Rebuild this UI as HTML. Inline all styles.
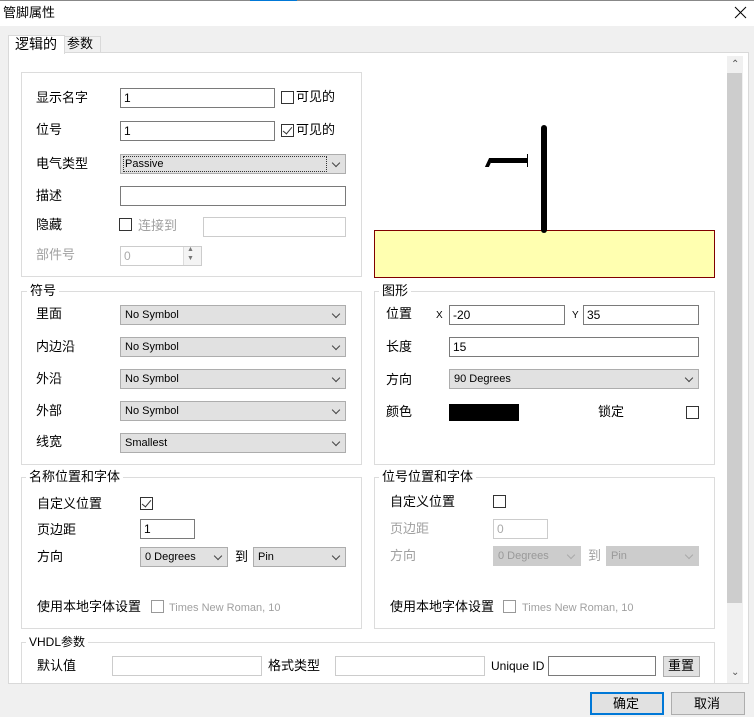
<!DOCTYPE html>
<html><head><meta charset="utf-8"><style>
*{box-sizing:border-box;margin:0;padding:0}
body{width:754px;height:717px;background:#f0f0f0;position:relative;overflow:hidden;font-family:"Liberation Sans","Noto Sans CJK SC",sans-serif;font-size:12px;color:#000}
.a{position:absolute}
.t{position:absolute;font-size:13px;line-height:16px;white-space:nowrap}
.g{color:#a0a0a0}
.in{position:absolute;height:20px;background:#fff;border:1px solid #7a7a7a;font-size:12px;line-height:18px;padding-left:3px}
.in.d{border-color:#ccc;color:#aaa}
.sel{position:absolute;height:20px;background:#e1e1e1;border:1px solid #adadad;font-size:11px;line-height:19px;padding-left:4px}
.sel:after{content:"";position:absolute;right:6px;top:5px;width:5px;height:5px;border-right:1px solid #444;border-bottom:1px solid #444;transform:rotate(45deg)}
.sel.d{border-color:#ccc;background:#ccc;color:#999}
.sel.d:after{border-color:#aaa}
.cb{position:absolute;width:13px;height:13px;border:1px solid #333;background:#fff}
.cb.k:after{content:"";position:absolute;left:3px;top:0px;width:4px;height:8px;border-right:1px solid #333;border-bottom:1px solid #333;transform:rotate(40deg)}
.cb.d{border-color:#999}
.box{position:absolute;border:1px solid #dcdcdc}
.lg{position:absolute;background:#fff;padding:0 3px;font-size:13px;line-height:16px}
</style></head><body>
<div class="a" style="left:0;top:0;width:754px;height:26px;background:#fff"></div>
<div class="a" style="left:0;top:0;width:250px;height:1px;background:#888"></div>
<div class="a" style="left:250px;top:0;width:47px;height:1px;background:#0078d7"></div>
<div class="a" style="left:297px;top:0;width:457px;height:1px;background:#888"></div>
<div class="t" style="left:3px;top:5px">管脚属性</div>
<svg class="a" style="left:734px;top:6px" width="13" height="13"><path d="M1 1L12 12M12 1L1 12" stroke="#000" stroke-width="1"/></svg>

<div class="a" style="left:64px;top:36px;width:37px;height:17px;background:#f0f0f0;border:1px solid #d9d9d9"></div>
<div class="t" style="left:67px;top:36px">参数</div>
<div class="a" style="left:8px;top:52px;width:741px;height:632px;background:#fff;border:1px solid #d9d9d9"></div>
<div class="a" style="left:8px;top:35px;width:57px;height:19px;background:#fff;border:1px solid #d9d9d9;border-bottom:none"></div>
<div class="t" style="left:15px;top:36px;font-size:14px">逻辑的</div>

<div class="a" style="left:727px;top:56px;width:16px;height:627px;background:#f0f0f0"></div>
<div class="a" style="left:727px;top:73px;width:15px;height:530px;background:#cdcdcd"></div>
<div class="t" style="left:731px;top:57px;font-size:10px;color:#555">&#8963;</div>
<div class="t" style="left:731px;top:665px;font-size:10px;color:#555">&#8964;</div>

<div class="box" style="left:21px;top:72px;width:341px;height:205px"></div>
<div class="t" style="left:36px;top:90px">显示名字</div>
<div class="in" style="left:120px;top:88px;width:155px">1</div>
<div class="cb" style="left:281px;top:91px"></div><div class="t" style="left:296px;top:89px">可见的</div>
<div class="t" style="left:36px;top:122px">位号</div>
<div class="in" style="left:120px;top:121px;width:155px">1</div>
<div class="cb k" style="left:281px;top:124px"></div><div class="t" style="left:296px;top:122px">可见的</div>
<div class="t" style="left:36px;top:156px">电气类型</div>
<div class="sel" style="left:120px;top:154px;width:226px;padding-left:2px"><span style="border:1px dotted #333;display:block;width:204px;height:16px;line-height:15px;margin-top:1px;padding-left:1px">Passive</span></div>
<div class="t" style="left:36px;top:188px">描述</div>
<div class="in" style="left:120px;top:186px;width:226px"></div>
<div class="t" style="left:36px;top:217px">隐藏</div>
<div class="cb" style="left:119px;top:218px"></div>
<div class="t g" style="left:138px;top:218px">连接到</div>
<div class="in d" style="left:203px;top:217px;width:143px"></div>
<div class="t g" style="left:36px;top:247px">部件号</div>
<div class="in d" style="left:120px;top:246px;width:82px">0</div>
<div class="a" style="left:183px;top:247px;width:18px;height:18px;border-left:1px solid #ddd;background:#f4f4f4"></div>
<div class="t" style="left:187px;top:245px;font-size:7px;color:#777;line-height:9px">▲<br>▼</div>

<div class="a" style="left:374px;top:230px;width:341px;height:48px;background:#ffffb0;border:1px solid #800000"></div>
<div class="a" style="left:541px;top:125px;width:6px;height:108px;background:#000;border-radius:3px"></div>
<div class="a" style="left:491px;top:158px;width:37px;height:5px;background:#000"></div>
<div class="a" style="left:527px;top:154px;width:1px;height:13px;background:#000"></div>
<div class="a" style="left:487px;top:158px;width:4px;height:9px;background:#000;transform:skewX(-25deg)"></div>

<div class="box" style="left:21px;top:291px;width:341px;height:174px"></div>
<div class="lg" style="left:27px;top:283px">符号</div>
<div class="t" style="left:36px;top:306px">里面</div><div class="sel" style="left:120px;top:305px;width:226px">No Symbol</div>
<div class="t" style="left:36px;top:339px">内边沿</div><div class="sel" style="left:120px;top:337px;width:226px">No Symbol</div>
<div class="t" style="left:36px;top:371px">外沿</div><div class="sel" style="left:120px;top:369px;width:226px">No Symbol</div>
<div class="t" style="left:36px;top:403px">外部</div><div class="sel" style="left:120px;top:401px;width:226px">No Symbol</div>
<div class="t" style="left:36px;top:434px">线宽</div><div class="sel" style="left:120px;top:433px;width:226px">Smallest</div>

<div class="box" style="left:374px;top:291px;width:341px;height:174px"></div>
<div class="lg" style="left:379px;top:283px">图形</div>
<div class="t" style="left:386px;top:306px">位置</div>
<div class="t" style="left:436px;top:308px;font-size:10px">X</div>
<div class="in" style="left:449px;top:305px;width:116px">-20</div>
<div class="t" style="left:572px;top:308px;font-size:10px">Y</div>
<div class="in" style="left:583px;top:305px;width:116px">35</div>
<div class="t" style="left:386px;top:339px">长度</div>
<div class="in" style="left:449px;top:337px;width:250px">15</div>
<div class="t" style="left:386px;top:372px">方向</div>
<div class="sel" style="left:449px;top:369px;width:250px">90 Degrees</div>
<div class="t" style="left:386px;top:404px">颜色</div>
<div class="a" style="left:449px;top:404px;width:70px;height:17px;background:#000"></div>
<div class="t" style="left:598px;top:404px">锁定</div>
<div class="cb" style="left:686px;top:406px"></div>

<div class="box" style="left:21px;top:477px;width:341px;height:152px"></div>
<div class="lg" style="left:26px;top:469px">名称位置和字体</div>
<div class="t" style="left:37px;top:496px">自定义位置</div>
<div class="cb k" style="left:140px;top:497px"></div>
<div class="t" style="left:37px;top:522px">页边距</div>
<div class="in" style="left:140px;top:519px;width:55px">1</div>
<div class="t" style="left:37px;top:549px">方向</div>
<div class="sel" style="left:140px;top:547px;width:88px">0 Degrees</div>
<div class="t" style="left:235px;top:549px">到</div>
<div class="sel" style="left:253px;top:547px;width:93px">Pin</div>
<div class="t" style="left:37px;top:599px">使用本地字体设置</div>
<div class="cb d" style="left:151px;top:600px"></div>
<div class="t g" style="left:169px;top:600px;font-size:11px">Times New Roman, 10</div>

<div class="box" style="left:374px;top:477px;width:341px;height:152px"></div>
<div class="lg" style="left:379px;top:469px">位号位置和字体</div>
<div class="t" style="left:390px;top:494px">自定义位置</div>
<div class="cb" style="left:493px;top:495px"></div>
<div class="t g" style="left:390px;top:521px">页边距</div>
<div class="in d" style="left:493px;top:519px;width:55px">0</div>
<div class="t g" style="left:390px;top:548px">方向</div>
<div class="sel d" style="left:493px;top:546px;width:88px">0 Degrees</div>
<div class="t g" style="left:588px;top:548px">到</div>
<div class="sel d" style="left:606px;top:546px;width:93px">Pin</div>
<div class="t" style="left:390px;top:599px">使用本地字体设置</div>
<div class="cb d" style="left:503px;top:600px"></div>
<div class="t g" style="left:522px;top:600px;font-size:11px">Times New Roman, 10</div>

<div class="box" style="left:21px;top:642px;width:694px;height:60px;border-bottom:none"></div>
<div class="lg" style="left:26px;top:634px;font-size:12px">VHDL参数</div>
<div class="t" style="left:37px;top:658px">默认值</div>
<div class="in" style="left:112px;top:656px;width:150px;border-color:#ccc"></div>
<div class="t" style="left:268px;top:658px">格式类型</div>
<div class="in" style="left:335px;top:656px;width:150px;border-color:#ccc"></div>
<div class="t" style="left:491px;top:658px;font-size:12px">Unique ID</div>
<div class="in" style="left:548px;top:656px;width:108px"></div>
<div class="a" style="left:663px;top:656px;width:37px;height:21px;background:#e1e1e1;border:1px solid #adadad"></div>
<div class="t" style="left:668px;top:658px">重置</div>
<div class="a" style="left:9px;top:683px;width:739px;height:1px;background:#d9d9d9"></div>
<div class="a" style="left:9px;top:684px;width:740px;height:33px;background:#f0f0f0"></div>

<div class="a" style="left:590px;top:692px;width:74px;height:23px;background:#e1e1e1;border:2px solid #0078d7"></div>
<div class="t" style="left:613px;top:696px">确定</div>
<div class="a" style="left:671px;top:692px;width:74px;height:23px;background:#e1e1e1;border:1px solid #adadad"></div>
<div class="t" style="left:694px;top:696px">取消</div>
</body></html>
